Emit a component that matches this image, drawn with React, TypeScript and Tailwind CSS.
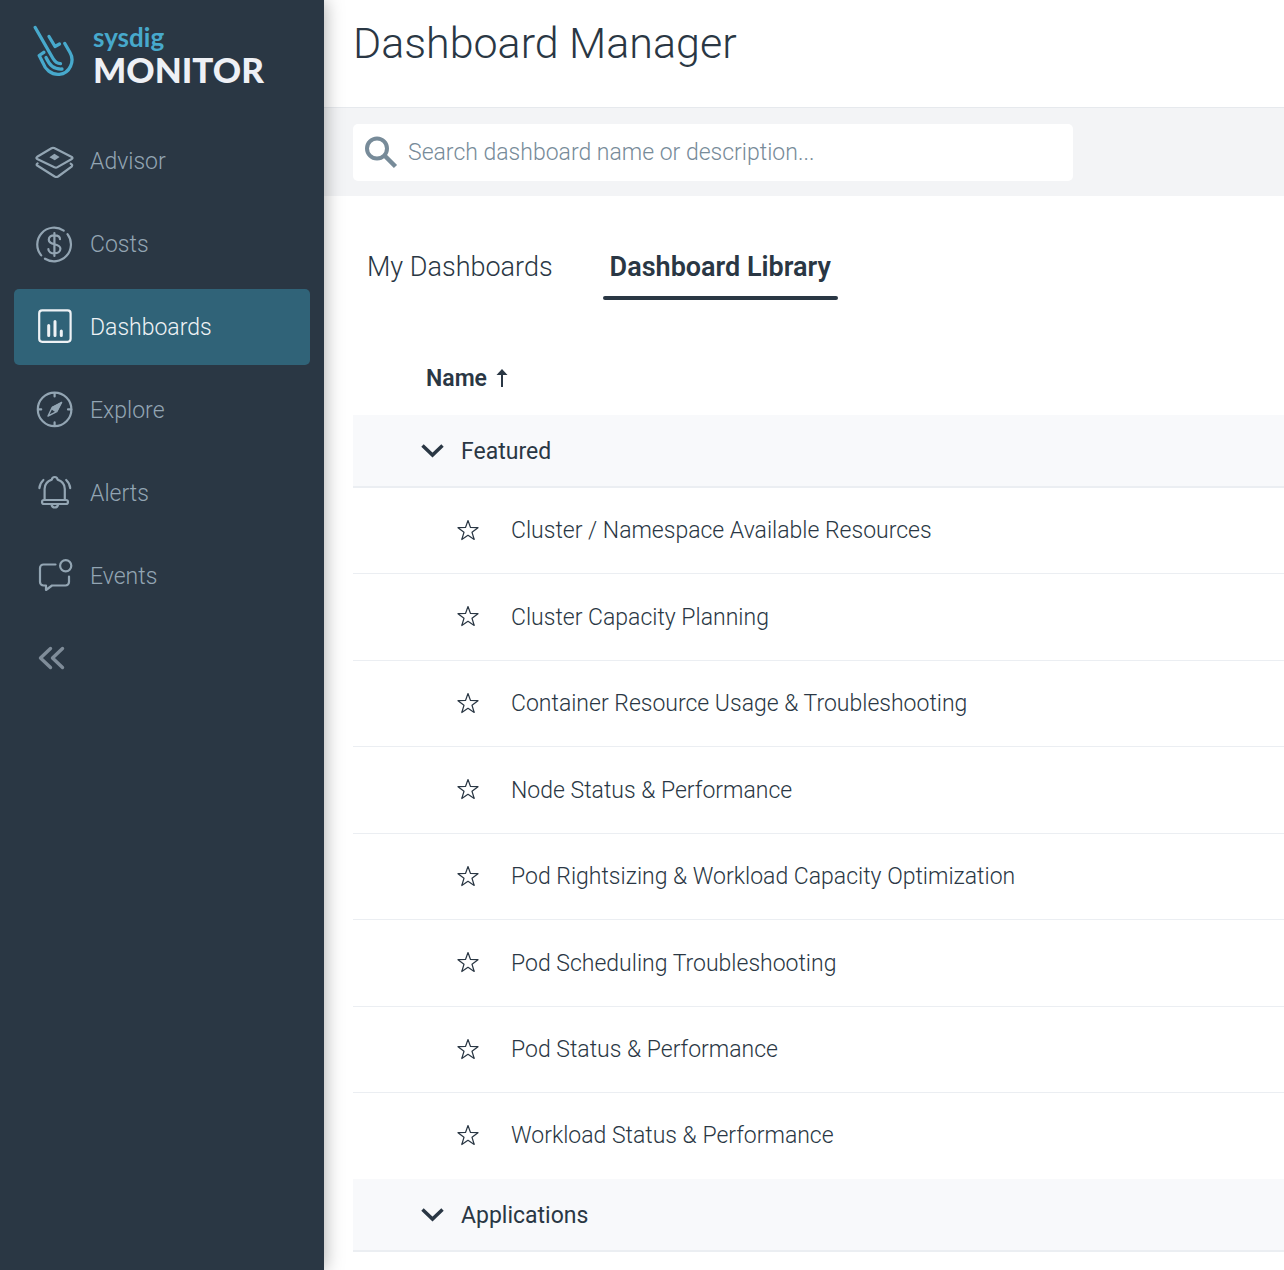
import React, { useState } from "react";

type IconProps = { children: React.ReactNode };

function NavIcon({ children }: IconProps) {
  return (
    <svg
      viewBox="0 0 40 40"
      className="size-10 shrink-0"
      fill="none"
      stroke="currentColor"
      strokeWidth="2.2"
      strokeLinecap="round"
      strokeLinejoin="round"
      aria-hidden="true"
    >
      {children}
    </svg>
  );
}

const navItems = [
  {
    label: "Advisor",
    icon: (
      <NavIcon>
        <path d="M17.5 7.2 3.2 15.8q-1.6 1.2 0 2.2L20.4 26.2q1.6.7 3.1-.1L37.8 18q1.4-1.1 0-2.1L20.2 7.1q-1.4-.6-2.7.1Z" />
        <path d="M3.6 22.3q-2 1.4 0 2.5L20.6 35.5q1.8 1 3.5 0L37.6 25.6q1.6-1.6-.9-2.9" />
        <path d="M20.4 12.8 25.6 16l-4.8 3.2L15.4 16.2Z" fill="currentColor" stroke="none" />
      </NavIcon>
    ),
  },
  {
    label: "Costs",
    icon: (
      <NavIcon>
        <path d="M29.7 6.6A16.900 16.900 0 0 0 7.2 31.400" />
        <path d="M33.500 10.200A16.900 16.900 0 0 1 11 34.700" />
        <path d="M20.400 9v23M26 15.200c0-2.400-2.400-3.900-5.600-3.900s-5.600 1.700-5.600 4.400c0 6.400 11.600 2.600 11.600 9 0 2.900-2.700 4.700-6 4.700s-6-1.700-6-4.200" />
      </NavIcon>
    ),
  },
  {
    label: "Dashboards",
    icon: (
      <NavIcon>
        <rect x="5.2" y="3.4" width="31.4" height="31.4" rx="3" />
        <path d="M14.7 18.5v10M21 14.5v14M27.3 24v4.5" strokeWidth="3" />
      </NavIcon>
    ),
  },
  {
    label: "Explore",
    icon: (
      <NavIcon>
        <circle cx="20.6" cy="19.4" r="16.8" />
        <path d="M20.6 3v3.4M20.6 32.4V36M4 19.4h3.2M34 19.4h3.2" />
        <path d="M28 12 18.2 16.8 17.6 19.4 21.4 22.2 23.6 21Z" fill="currentColor" stroke="none" />
        <path d="M27.6 12.4 18.2 17.4 14 26l8.8-4.4Z" strokeWidth="1.4" />
      </NavIcon>
    ),
  },
  {
    label: "Alerts",
    icon: (
      <NavIcon>
        <path d="M10.6 26.8V16c0-4.6 2.9-8 7.2-9.4C18 4.8 19 4 20.7 4s2.7.8 2.9 2.6c4.3 1.4 7.2 4.8 7.2 9.4v10.8" />
        <rect x="8" y="27" width="26" height="4" rx="2" />
        <path d="M17.5 31.5c.4 2 1.6 3 3.3 3s2.9-1 3.3-3" />
        <path d="M5.4 15.2c.3-3.3 1.6-6 4-8.2M36.2 15.2c-.3-3.3-1.6-6-4-8.2" />
      </NavIcon>
    ),
  },
  {
    label: "Events",
    icon: (
      <NavIcon>
        <path d="M21.5 8.500H9.500a3.500 3.500 0 0 0-3.500 3.500V26a3.500 3.500 0 0 0 3.500 3.500H12V34l6-4.500H31.500A3.500 3.500 0 0 0 35 26V20.500" />
        <circle cx="31.7" cy="9.8" r="5.6" />
      </NavIcon>
    ),
  },
];

const groups = [
  {
    name: "Featured",
    dashboards: [
      "Cluster / Namespace Available Resources",
      "Cluster Capacity Planning",
      "Container Resource Usage & Troubleshooting",
      "Node Status & Performance",
      "Pod Rightsizing & Workload Capacity Optimization",
      "Pod Scheduling Troubleshooting",
      "Pod Status & Performance",
      "Workload Status & Performance",
    ],
  },
  { name: "Applications", dashboards: [] as string[] },
];

function Logo() {
  return (
    <a href="#" className="mx-[33px] flex h-[60px] items-start gap-[18px]">
      <svg viewBox="0 0 42 54" className="h-[54px] w-[42px] shrink-0" fill="none" stroke="#47a9cc" strokeWidth="3.300" strokeLinecap="round" strokeLinejoin="round" aria-hidden="true">
        <path d="M2.2 3.5 20 34.500q3 5 7.500 5.200" />
        <path d="M16 12.500 22 22.500l4.500-2.500" />
        <path d="M31.800 19.500 37 28.500C42 37 37 49.500 26.300 50.300 18 51 12 45 10 39L6.200 31.500l4.600-3.200" />
        <path d="M13 33.500C16.500 41 20.500 45.500 29 45" />
      </svg>
      <span className="flex flex-col font-['Lato',sans-serif]">
        <span className="text-[26px] leading-[26px] font-bold text-[#47a9cc]">sysdig</span>
        <span className="text-[35px] leading-[38px] font-black text-[#eef0f5]">MONITOR</span>
      </span>
    </a>
  );
}

function Sidebar() {
  return (
    <aside className="relative z-10 flex w-[324px] shrink-0 flex-col bg-[#2a3744] pt-6 shadow-[0_0_18px_rgba(0,0,0,0.35)]">
      <Logo />
      <nav className="mt-[39px] flex flex-col gap-[7px] px-3.5">
        {navItems.map((item) => (
          <a
            key={item.label}
            href="#"
            aria-current={item.label === "Dashboards" ? "page" : undefined}
            className="flex h-[76px] items-center gap-4 rounded-[5px] px-5 text-[23px] font-[350] text-[#93a5b3] aria-[current=page]:bg-[#306378] aria-[current=page]:text-[#eef2f5]"
          >
            {item.icon}
            <span className="pt-0.5">{item.label}</span>
          </a>
        ))}
      </nav>
      <button type="button" aria-label="Collapse menu" className="mt-7 ml-[37px] w-8 text-[#7f8c99]">
        <svg viewBox="0 0 32 32" className="size-8" fill="none" stroke="currentColor" strokeWidth="3.4" strokeLinecap="round" strokeLinejoin="round" aria-hidden="true">
          <path d="M13.500 6.500 3.500 16l10 9.500M25.500 6.500 15.500 16l10 9.500" />
        </svg>
      </button>
    </aside>
  );
}

function Star() {
  return (
    <svg viewBox="0 0 24 24" className="size-6" fill="none" stroke="currentColor" strokeWidth="1.2" strokeLinejoin="round" aria-hidden="true">
      <path d="M12 2.500 14.500 9.500 22 9.700 16 14.300 18.200 21.500 12 17.300 5.800 21.500 8 14.300 2 9.700 9.500 9.500Z" />
    </svg>
  );
}

export default function App() {
  const [query, setQuery] = useState("");
  return (
    <div className="flex min-h-screen overflow-hidden bg-white font-['Roboto',sans-serif] text-[#2a3744]">
      <Sidebar />
      <main className="min-w-0 flex-1">
        <header className="flex h-[108px] items-start border-b border-[#e6e9ed] px-[29px] pt-4">
          <h1 className="text-[43px] leading-[54px] font-light">Dashboard Manager</h1>
        </header>
        <div className="bg-[#f3f4f6] px-[29px] pt-4 pb-[15px]">
          <label className="flex h-[57px] max-w-[720px] items-center gap-2 rounded-[5px] bg-white px-[11px] text-[#778b99]">
            <svg viewBox="0 0 36 36" className="size-9 shrink-0" fill="none" stroke="currentColor" strokeWidth="4" aria-hidden="true">
              <circle cx="13" cy="13.500" r="10" />
              <path d="M20.500 20.500 31.500 31.500" strokeWidth="4.500" />
            </svg>
            <input
              type="search"
              aria-label="Search dashboards"
              value={query}
              onChange={(e) => setQuery(e.target.value)}
              placeholder="Search dashboard name or description..."
              className="min-w-0 flex-1 pt-0.5 text-[23px] font-[350] outline-none placeholder:text-[#778b99]"
            />
          </label>
        </div>
        <div role="tablist" className="mt-[38px] ml-9 flex gap-[43px] text-[27px] leading-[34px]">
          <button type="button" role="tab" aria-selected="false" className="px-[7px] py-4 font-light">
            My Dashboards
          </button>
          <button type="button" role="tab" aria-selected="true" className="relative px-[7px] py-4 font-semibold after:absolute after:inset-x-0 after:bottom-0 after:h-1 after:rounded-full after:bg-[#2a3744]">
            Dashboard Library
          </button>
        </div>
        <div className="pl-[29px]">
          <table className="w-full border-separate border-spacing-0 text-left text-[23px]">
            <thead>
              <tr>
                <th className="h-[115px] p-0 pt-10 pl-[73px] font-semibold" aria-sort="ascending">
                  <button type="button" className="flex items-center gap-2">
                    <span className="pt-1">Name</span>
                    <svg viewBox="0 0 14 20" className="h-5 w-3.5" fill="none" stroke="currentColor" strokeWidth="2" aria-hidden="true">
                      <path d="M7 19V3" />
                      <path d="M1.500 7 7 1l5.500 6Z" fill="currentColor" stroke="none" />
                    </svg>
                  </button>
                </th>
              </tr>
            </thead>
            {groups.map((group) => (
              <React.Fragment key={group.name}>
                <tbody>
                  <tr>
                    <th className="h-[73px] border-b-2 border-[#ebeef2] bg-[#f8f9fb] p-0 pl-[67px] font-normal">
                      <button type="button" aria-expanded="true" className="flex items-center gap-[17px]">
                        <svg viewBox="0 0 24 24" className="size-6" fill="none" stroke="currentColor" strokeWidth="3.5" aria-hidden="true">
                          <path d="M2.500 6.500 12.500 16l10-9.500" />
                        </svg>
                        <span className="pt-1">{group.name}</span>
                      </button>
                    </th>
                  </tr>
                </tbody>
                <tbody>
                  {group.dashboards.map((name) => (
                    <tr key={name} className="group">
                      <td className="h-[86px] border-b border-[#ebeef2] p-0 pb-0.5 pl-[103px] font-[350] group-last:border-transparent group-[:nth-child(even):not(:last-child)]:h-[87px]">
                        <div className="flex items-center gap-[31px]">
                          <button type="button" aria-label={"Favorite " + name}>
                            <Star />
                          </button>
                          <a href="#" className="pt-1">
                            {name}
                          </a>
                        </div>
                      </td>
                    </tr>
                  ))}
                </tbody>
              </React.Fragment>
            ))}
          </table>
        </div>
      </main>
    </div>
  );
}
